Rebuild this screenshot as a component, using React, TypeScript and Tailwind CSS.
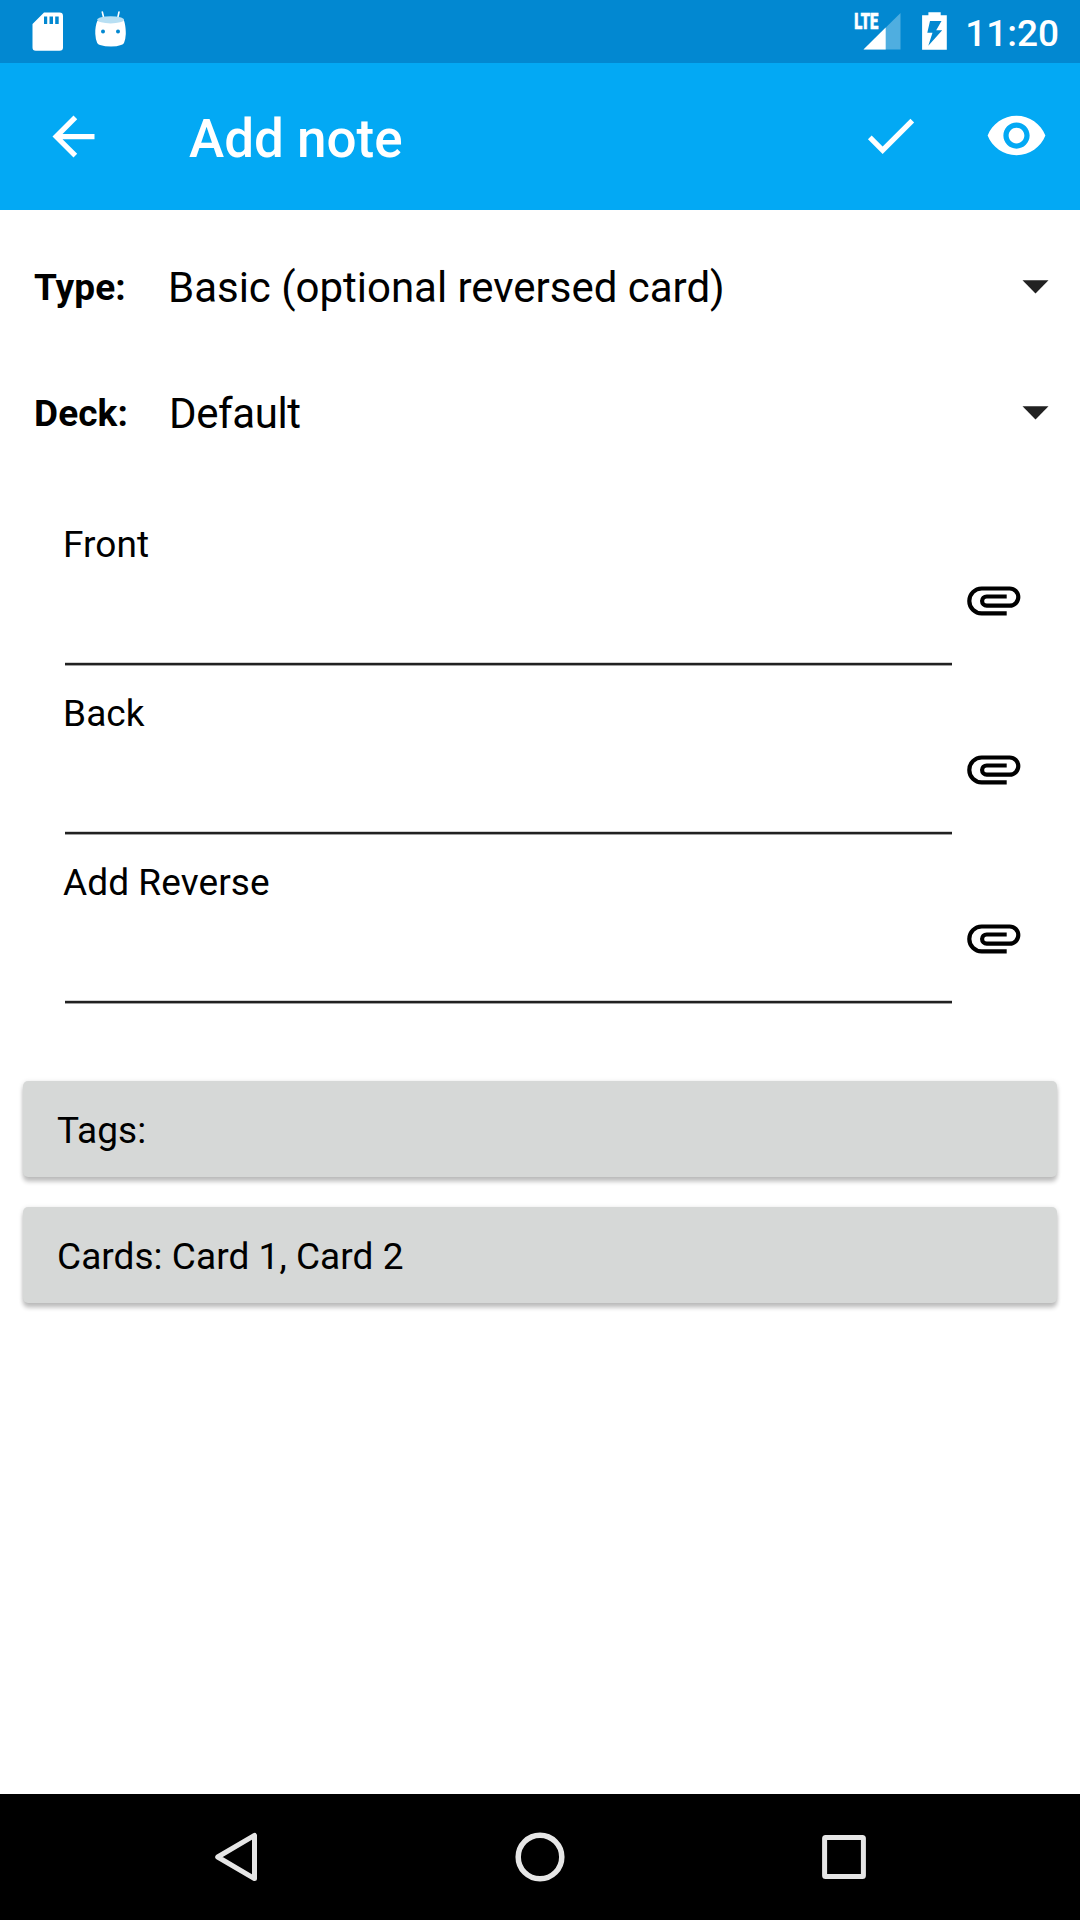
import React from "react";

function StatusBar() {
  return (
    <header className="flex h-[63px] items-start justify-between bg-[#0288d1] pr-[21px] pl-8 text-white">
      <div className="flex h-full items-start gap-8">
        <svg className="mt-[12px] h-[39px] w-[31px]" viewBox="0 0 31 39" fill="none">
          <path
            fill="#fff"
            fillRule="evenodd"
            d="M12 .6H27.5Q31 .6 31 4V35.500Q31 38.700 27.500 38.700H3.800Q.5 38.700 .5 35.500V12ZM12 4.500V12H15.200V4.500ZM17.500 4.500V12H21V4.500ZM23.200 4.500V12H26.700V4.500Z"
          />
        </svg>
        <svg className="mt-[10px] h-[38px] w-[32px]" viewBox="0 0 32 38" fill="none">
          <path d="M7.300 2 9 9M24 2 22.500 9" stroke="#fff" strokeWidth="1.600" strokeLinecap="round" />
          <path
            fill="#fff"
            d="M2.300 11C1 14 0 19 .3 24Q.6 30 2.200 33Q3 34.300 5 35Q10 36.600 16 36.600T26 35Q28.300 34.300 29 33Q30.500 30 30.800 24C31 19 30 13 28.800 10Z"
          />
          <ellipse cx="15.600" cy="9.800" rx="13.400" ry="3.600" fill="#b8dff3" />
          <circle cx="8" cy="21.500" r="2" fill="#0288d1" />
          <circle cx="23" cy="21.500" r="2" fill="#0288d1" />
        </svg>
      </div>
      <div className="flex h-full items-start">
        <svg className="mt-[6px] h-[44px] w-[48px] overflow-visible" viewBox="0 -6 48 44" fill="none">
          <path d="M47.500 1V37.500H10.500Z" fill="#4faee0" />
          <path d="M32.700 15.500V37.500H10.500Z" fill="#fff" />
          <text
            x="1.200"
            y="17"
            fill="#fff"
            stroke="#fff"
            strokeWidth="0.700"
            fontSize="21.500"
            fontWeight="900"
            textLength="24"
            lengthAdjust="spacingAndGlyphs"
          >
            LTE
          </text>
        </svg>
        <svg className="mt-[12px] ml-[21px] h-[38px] w-[25px]" viewBox="0 0 25 38" fill="none">
          <path
            fill="#fff"
            fillRule="evenodd"
            d="M6.400 .3H18.700V3.200H24.800V37.800H.1V3.200H6.400ZM8 9 5.300 20.800H10.500L6.300 33.800L20.200 18.200H14.200L19.500 9Z"
          />
        </svg>
        <span className="mt-[12px] ml-[18px] text-[37px] leading-[43px] font-medium">11:20</span>
      </div>
    </header>
  );
}

function Toolbar() {
  return (
    <div className="flex h-[147px] items-center bg-[#03a9f4] pr-8 pl-[42px] text-white">
      <svg className="size-[63px]" viewBox="0 0 24 24" fill="currentColor">
        <path d="M20 11H7.830l5.590-5.590L12 4l-8 8 8 8 1.410-1.410L7.830 13H20v-2z" />
      </svg>
      <h1 className="mt-[5px] ml-[84px] flex-1 text-[53px] leading-[62px] font-medium">Add note</h1>
      <svg className="-mt-[2px] size-[63px]" viewBox="0 0 24 24" fill="currentColor">
        <path d="M9 16.170L4.830 12l-1.420 1.410L9 19 21 7l-1.410-1.410z" />
      </svg>
      <svg className="-mt-[2px] ml-[63px] size-[63px]" viewBox="0 0 24 24" fill="currentColor">
        <path d="M12 4.500C7 4.500 2.730 7.610 1 12c1.730 4.390 6 7.500 11 7.500s9.270-3.110 11-7.500c-1.730-4.390-6-7.500-11-7.500zM12 17c-2.760 0-5-2.240-5-5s2.240-5 5-5 5 2.240 5 5-2.240 5-5 5zm0-8c-1.660 0-3 1.340-3 3s1.340 3 3 3 3-1.340 3-3-1.340-3-3-3z" />
      </svg>
    </div>
  );
}

function Selector({ label, value, tight = false }: { label: string; value: string; tight?: boolean }) {
  return (
    <div className="flex h-[126px] items-center pr-[31px] pl-[34px]">
      <span className="w-[134px] text-[37px] leading-[43px] font-bold tracking-[0.1px]">{label}</span>
      <span
        className={
          tight
            ? "mt-[2px] flex-1 pl-px text-[42px] leading-[50px] tracking-[-0.4px]"
            : "mt-[2px] flex-1 text-[42px] leading-[50px] tracking-[-0.02px]"
        }
      >
        {value}
      </span>
      <svg className="h-[14px] w-[27px]" viewBox="0 0 27 14" fill="#212121">
        <path d="M.5 .300H26.500L13.500 13.400Z" />
      </svg>
    </div>
  );
}

function Field({ label }: { label: string }) {
  return (
    <div className="h-[169px] pr-[54px] pl-[63px]">
      <div className="h-[43px] text-[37px] leading-[43px] tracking-[0.08px]">{label}</div>
      <div className="flex items-start justify-between pl-[2px]">
        <div className="flex h-[100px] w-[887px] flex-col justify-end">
          <div className="h-px bg-[#d0d0d0]" />
          <div className="h-[2px] bg-[#212121]" />
          <div className="h-px bg-[#a0a0a0]" />
        </div>
        <svg className="mt-[2px] size-[63px]" viewBox="0 0 63 63" fill="none" stroke="#000" strokeWidth="4.200">
          <path d="M43.700 45.300H18.700A12.400 12.400 0 0 1 18.700 20.500H46.700A8.600 8.600 0 0 1 46.700 37.700H23.700A4.600 4.600 0 0 1 23.700 28.500H43.700" />
        </svg>
      </div>
    </div>
  );
}

function WideButton({ children }: { children: React.ReactNode }) {
  return (
    <button className="flex h-[96px] items-center rounded-[5px] bg-[#d6d8d7] pl-[34px] text-left text-[37px] leading-[43px] tracking-[0.05px] shadow-[0_5px_4px_rgba(0,0,0,0.2),0_1px_5px_rgba(0,0,0,0.14)]">
      <span className="mt-[2px]">{children}</span>
    </button>
  );
}

function NavigationBar() {
  return (
    <nav className="flex h-[126px] items-center justify-between bg-black pr-[214px] pl-[214px]">
      <svg className="h-[52px] w-[44px]" viewBox="0 0 44 52" fill="none" stroke="#e6e6e6" strokeWidth="5" strokeLinejoin="round">
        <path d="M40.500 4.400V47.600L3.700 26Z" />
      </svg>
      <svg className="size-[52px]" viewBox="0 0 52 52" fill="none" stroke="#e6e6e6" strokeWidth="5.500">
        <circle cx="26" cy="26" r="21.800" />
      </svg>
      <svg className="size-[44px]" viewBox="0 0 44 44" fill="none" stroke="#e6e6e6" strokeWidth="5" strokeLinejoin="round">
        <rect x="2.600" y="2.600" width="38.800" height="38.800" rx="1" />
      </svg>
    </nav>
  );
}

export default function App() {
  return (
    <div className="flex h-[1920px] w-[1080px] flex-col overflow-hidden bg-white font-['Roboto',sans-serif] text-black">
      <StatusBar />
      <Toolbar />
      <main className="flex-1 pt-[14px]">
        <Selector label="Type:" value="Basic (optional reversed card)" />
        <Selector label="Deck:" value="Default" tight />
        <div className="pt-[47px]">
          <Field label="Front" />
          <Field label="Back" />
          <Field label="Add Reverse" />
        </div>
        <div className="mt-[51px] flex flex-col gap-[30px] px-[23px]">
          <WideButton>Tags:</WideButton>
          <WideButton>Cards: Card 1, Card 2</WideButton>
        </div>
      </main>
      <NavigationBar />
    </div>
  );
}
